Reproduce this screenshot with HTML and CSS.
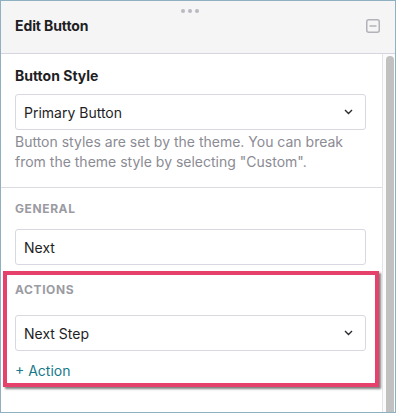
FILE: index.html
```html
<!DOCTYPE html>
<html>
<head>
<meta charset="utf-8">
<link rel="stylesheet" href="styles.css">
</head>
<body>
<div class="window">
  <div class="header">
    <div class="grip"><span></span><span></span><span></span></div>
    <div class="title">Edit Button</div>
    <svg class="collapse" width="14" height="14" viewBox="0 0 14 14">
      <rect x="0.75" y="0.75" width="12.5" height="12.5" rx="2" fill="none" stroke="#b2b2ba" stroke-width="1.5"/>
      <line x1="3.5" y1="7" x2="10.5" y2="7" stroke="#b2b2ba" stroke-width="1.5"/>
    </svg>
  </div>
  <div class="main">
    <div class="content">
      <div class="section first">
        <div class="heading">Button Style</div>
        <div class="select">
          <span>Primary Button</span>
          <svg width="9" height="6" viewBox="0 0 9 6"><path d="M1 1 L4.5 4.5 L8 1" fill="none" stroke="#2a2a30" stroke-width="1.4"/></svg>
        </div>
        <p class="help">Button styles are set by the theme. You can break from the theme style by selecting "Custom".</p>
      </div>
      <div class="section general">
        <div class="label">General</div>
        <div class="input">Next</div>
      </div>
      <div class="highlight">
        <div class="label">Actions</div>
        <div class="select">
          <span>Next Step</span>
          <svg width="9" height="6" viewBox="0 0 9 6"><path d="M1 1 L4.5 4.5 L8 1" fill="none" stroke="#2a2a30" stroke-width="1.4"/></svg>
        </div>
        <div class="add">+ Action</div>
      </div>
    </div>
    <div class="scrollbar"><div class="thumb"></div></div>
  </div>
</div>
</body>
</html>
```

FILE: styles.css
```css
* { box-sizing: border-box; }
html, body { margin: 0; padding: 0; background: #ffffff; }
body { font-family: Inter, "Noto Sans", sans-serif; color: #1e1e24; }

.window {
  width: 396px;
  height: 413px;
  border: 1px solid #8fb0c0;
  display: flex;
  flex-direction: column;
  overflow: hidden;
}

.header {
  position: relative;
  height: 53px;
  flex: none;
  background: #f5f5f6;
  border-bottom: 1px solid #d6d4de;
  display: flex;
  align-items: center;
  justify-content: space-between;
  padding: 0 15px 3px 14px;
}
.grip {
  position: absolute;
  top: 8px;
  left: 180px;
  display: flex;
  gap: 3px;
}
.grip span {
  width: 4px;
  height: 4px;
  border-radius: 50%;
  background: #b9b9c1;
}
.title {
  font-size: 14px;
  font-weight: 700;
  letter-spacing: -0.1px;
}
.collapse { display: block; margin-top: 1px; }

.main {
  flex: 1;
  display: flex;
  min-height: 0;
}
.content {
  flex: 1;
  display: flex;
  flex-direction: column;
}
.scrollbar {
  width: 13px;
  flex: none;
  border-left: 1px solid #e4e4e8;
  background: #fbfbfb;
  padding: 2px 2px 0 2px;
}
.thumb {
  width: 8px;
  height: 100%;
  margin-left: 1px;
  background: #c1c1c1;
  border-radius: 4px 4px 0 0;
}

.section { padding: 0 16px 0 14px; }
.section.first {
  padding-top: 12px;
  padding-bottom: 15px;
  border-bottom: 1px solid #dcdae2;
}
.heading {
  font-size: 14px;
  font-weight: 700;
  line-height: 20px;
  margin-bottom: 8px;
}
.select, .input {
  height: 36px;
  border: 1px solid #d9d7e0;
  border-radius: 3px;
  display: flex;
  align-items: center;
  justify-content: space-between;
  padding: 0 12px 0 8px;
  font-size: 14px;
  color: #1e1e24;
  background: #fff;
}
.help {
  margin: 2px 0 0 0;
  font-size: 14px;
  line-height: 20px;
  color: #8b8b94;
}
.section.general { padding-top: 13px; }
.label {
  font-size: 12px;
  line-height: 16px;
  font-weight: 700;
  letter-spacing: 0.6px;
  text-transform: uppercase;
  color: #9b9ba3;
  margin-bottom: 12px;
}
.highlight {
  margin: 6px 3px 0 2px;
  border: 4px solid #e6416b;
  box-shadow: 2px 2px 2px rgba(0, 0, 0, 0.5);
  padding: 7px 9px 2px 8px;
  background: #fff;
}
.highlight .label { margin-bottom: 17px; }
.add {
  margin-top: 10px;
  font-size: 14px;
  line-height: 20px;
  color: #17798a;
}
```
